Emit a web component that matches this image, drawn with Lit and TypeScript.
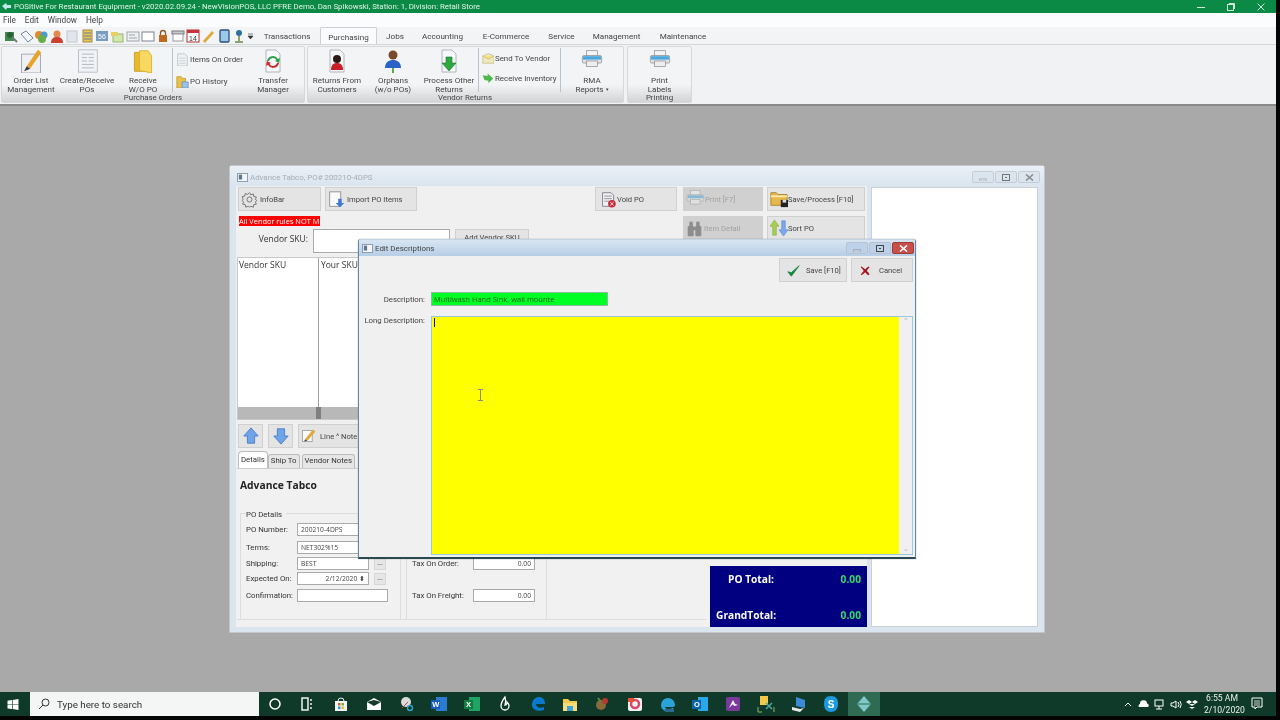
import { LitElement, html, css, svg } from "lit";
import { customElement } from "lit/decorators.js";

const doc = (inner: unknown = "") => svg`<path d="M5 1h10l4 4v18H5z" fill="#f7f8fa" stroke="#aeb4bc" stroke-width="1"/>${inner}`;
const printer = svg`<rect x="8" y="1" width="16" height="8" fill="#f4f4f4" stroke="#888"/><rect x="2" y="8" width="28" height="11" rx="2" fill="#dfe3e8" stroke="#888"/><rect x="3" y="9" width="26" height="5" fill="#4aa8dc"/><rect x="8" y="16" width="16" height="8" fill="#eee" stroke="#888"/>`;

const icons: Record<string, unknown> = {
  note: svg`<rect x="3" y="6" width="22" height="22" fill="#eef0f4" stroke="#9aa0aa"/><path d="M9 20 L22 1 L26 4 L13 23 Z" fill="#e8a32c"/><path d="M9 20l-3 6 7-3z" fill="#333"/>`,
  form: svg`<rect x="4" y="1" width="22" height="26" fill="#f1f3f6" stroke="#b4b9c2"/><path d="M8 6h14M8 10h6M16 10h6M8 14h6M16 14h6M8 18h14M8 22h14" stroke="#aab0ba"/>`,
  folder: svg`<path d="M4 4h14l4 3v19H4z" fill="#e8b92d" stroke="#c49a1e"/><path d="M10 2h10l4 6v20l-14-3z" fill="#f6d862" stroke="#d9ae2a"/>`,
  returns: svg`${doc()}<circle cx="12" cy="10" r="4" fill="#2a1a16"/><path d="M6 21c0-6 3-7 6-7s6 1 6 7z" fill="#c8202a"/>`,
  orphan: svg`<circle cx="12" cy="6" r="4.5" fill="#7a4a2c"/><path d="M4 19c0-6 4-8 8-8s8 2 8 8z" fill="#2a62c8"/><path d="M12 19v5M6 25h12" stroke="#5aa84a" stroke-width="2"/>`,
  down: svg`${doc()}<path d="M9 8h6v6h4l-7 8-7-8h4z" fill="#2ca83c" stroke="#1b7a2a" stroke-width=".6"/>`,
  transfer: svg`${doc()}<path d="M6 12a6 6 0 0 1 11-2l2-1-1 5-4-2 1.500-.700A4 4 0 0 0 8 12z" fill="#2aa04a"/><path d="M18 14a6 6 0 0 1-11 2l-2 1 1-5 4 2-1.500.700A4 4 0 0 0 16 14z" fill="#cc2a2a"/>`,
  printer,
  smalldoc: svg`<path d="M2 1h8l3 3v11H2z" fill="#eef2f4" stroke="#b8c2c8"/><path d="M4 6h7M4 9h7M4 12h7" stroke="#c8d0d4"/>`,
  smallfolder: svg`<path d="M1 2h5l2 2h3v11H1z" fill="#e8c14a" stroke="#c49a2e"/><path d="M7 8h7v7H7z" fill="#9cc2e8" stroke="#6a94c0"/>`,
  mail: svg`<path d="M1 5l7-3 7 3v9H1z" fill="#efe9c0" stroke="#c8be82"/><path d="M1 5l7 4 7-4" fill="#f5e27a" stroke="#c8be82"/>`,
  recv: svg`<path d="M1 4l6 1V2l7 6-6 6v-3L3 10z" fill="#4cb84c"/>`,
  gear: svg`<circle cx="10" cy="10" r="3" fill="none" stroke="#666"/><path d="M10 2l1.500 2.500 3-1 .5 3 3 .5-1 3 1.500 1-1.500 2 1 2.500-3 .5-.5 3-3-1-1.500 1-1.500-1-3 1-.5-3-3-.5 1-2.500-1.500-2L2.500 9.500l-1-3 3-.5.5-3 3 1z" fill="none" stroke="#666"/>`,
  importpo: svg`<rect x="2" y="1" width="13" height="17" fill="#fbfbfb" stroke="#888"/><path d="M12 9h4v5h3l-5 5-5-5h3z" fill="#3b78d8"/>`,
  voidpo: svg`<path d="M3 2h10l3 3v13H3z" fill="#eef0f4" stroke="#777"/><path d="M5 6h9M5 9h9M5 12h6" stroke="#888"/><circle cx="14" cy="15" r="4.500" fill="#c82a36"/><path d="M12 13l4 4M16 13l-4 4" stroke="#fff"/>`,
  print2: svg`<g opacity=".55" transform="scale(.65)">${printer}</g>`,
  save: svg`<path d="M1 3h6l2 2h10v12H1z" fill="#e8b84a" stroke="#a8842c"/><path d="M1 7h18" stroke="#fbe9b0" stroke-width="2"/><rect x="12" y="11" width="8" height="8" fill="#222"/><rect x="14" y="11" width="4" height="3" fill="#ddd"/>`,
  binoc: svg`<g fill="#8d8d8d"><rect x="2" y="7" width="7" height="12" rx="1"/><rect x="11" y="7" width="7" height="12" rx="1"/><rect x="4" y="2" width="4" height="6"/><rect x="12" y="2" width="4" height="6"/><rect x="8" y="8" width="4" height="4"/></g>`,
  sort: svg`<path d="M5 1l5 7H7v10H3V8H0z" fill="#a6cf52" stroke="#7ea32e" stroke-width=".6"/><path d="M15 19l-5-7h3V2h4v10h3z" fill="#7aa8e8" stroke="#4f82cc" stroke-width=".6"/>`,
  up: svg`<path d="M10 1l8 9h-4v8H6v-8H2z" fill="#6ea4ea" stroke="#4a7cc4"/>`,
  dn: svg`<path d="M10 19l8-9h-4V2H6v8H2z" fill="#6ea4ea" stroke="#4a7cc4"/>`,
  pencil: svg`<rect x="2" y="3" width="12" height="14" fill="#fafafa" stroke="#999"/><path d="M5 14L15 2l3 2.500L8 16z" fill="#e2a93a"/><path d="M5 14l-1 3 4-1z" fill="#444"/>`,
  check: svg`<path d="M1 9l4 5 9-12-9 8z" fill="#14863a" stroke="#14863a" stroke-linejoin="round"/>`,
  cross: svg`<path d="M2 2c3 2 4 3 5 4 2-2 3-3 5-4l1 1c-2 2-3 4-4 5 2 2 3 3 4 5l-2 1c-2-2-3-3-4-4-2 2-3 3-5 4l-1-1c2-2 3-3 4-5C4 6 3 5 1 3z" fill="#a8101c"/>`,
};

const icon = (name: string, size: number, vb = size) =>
  html`<svg class="ic" width=${size} height=${size} viewBox="0 0 ${vb} ${vb}">${icons[name]}</svg>`;

const quick = [
  svg`<rect x="1" y="3" width="9" height="9" fill="#3f8a4f"/><circle cx="6" cy="6" r="3" fill="#2b5f38"/><path d="M8 8l5 5" stroke="#777" stroke-width="2"/>`,
  svg`<path d="M2 5l5-3 7 7-5 4z" fill="#f4f6fa" stroke="#6b86ac"/>`,
  svg`<circle cx="5" cy="6" r="4" fill="#e68a2e"/><circle cx="10" cy="6" r="3.500" fill="#4a9ad4"/><circle cx="8" cy="10" r="4" fill="#6aae4a"/>`,
  svg`<circle cx="7" cy="5" r="3.500" fill="#e08a50"/><path d="M1 14c0-5 3-6 6-6s6 1 6 6z" fill="#cc4030"/>`,
  svg`<rect x="2" y="2" width="10" height="11" fill="#e2e6ec" stroke="#c2c8d0"/>`,
  svg`<rect x="3" y="1" width="9" height="12" fill="#e7c65c" stroke="#a08a3a"/><path d="M4 4h7M4 7h7M4 10h7" stroke="#6c7a8c"/>`,
  svg`<rect x="1" y="2" width="12" height="10" fill="#7a9cc0"/><text x="3" y="10" font-size="7" fill="#fff" font-family="Liberation Sans">56</text>`,
  svg`<rect x="3" y="5" width="10" height="8" fill="#cfe8b0" stroke="#9ab46c"/><path d="M1 3h7v4H1z" fill="#e8d060"/>`,
  svg`<rect x="1" y="3" width="12" height="9" fill="#eef0f2" stroke="#a0a6ae"/><path d="M3 6h6M3 9h8" stroke="#a0a6ae"/>`,
  svg`<rect x="1" y="3" width="12" height="9" fill="#fff" stroke="#7c8490"/>`,
  svg`<rect x="3" y="6" width="8" height="7" fill="#c06a1e"/><path d="M4.500 6V4a2.500 2.500 0 0 1 5 0v2" fill="none" stroke="#8c5a28" stroke-width="1.300"/>`,
  svg`<rect x="1" y="2" width="12" height="3" fill="#c8ccd2" stroke="#777"/><rect x="2" y="5" width="10" height="7" fill="#fff" stroke="#999"/>`,
  svg`<rect x="1" y="1" width="12" height="12" fill="#fff" stroke="#a33"/><rect x="1" y="1" width="12" height="3" fill="#c8343a"/><text x="3" y="12" font-size="7" font-family="Liberation Sans" fill="#333">14</text>`,
  svg`<path d="M2 12L11 2l2 2-9 10z" fill="#e2a93a"/>`,
  svg`<rect x="3" y="1" width="9" height="12" rx="1" fill="#9cc8ea" stroke="#27507a" stroke-width="1.300"/>`,
  svg`<circle cx="7" cy="4" r="3" fill="#2a70a0"/><path d="M7 7v5M3 13h8" stroke="#6a8a40" stroke-width="1.500"/>`,
];

const task = [
  svg`<circle cx="9" cy="9" r="5" fill="none" stroke="#fff" stroke-width="1.500"/>`,
  svg`<rect x="4" y="3" width="6" height="12" fill="none" stroke="#fff" stroke-width="1.400"/><path d="M13 4v2M13 8v2M13 12v2" stroke="#fff" stroke-width="1.400"/>`,
  svg`<path d="M3 6h12v10H3z" fill="#f4f4f4"/><path d="M6 6a3 3 0 0 1 6 0" fill="none" stroke="#f4f4f4"/><rect x="6" y="8" width="2.500" height="2.500" fill="#e25b2a"/><rect x="9.500" y="8" width="2.500" height="2.500" fill="#6fb33f"/><rect x="6" y="11.500" width="2.500" height="2.500" fill="#2d93dc"/><rect x="9.500" y="11.500" width="2.500" height="2.500" fill="#f4b92a"/>`,
  svg`<path d="M2 7l7-4 7 4v8H2z" fill="#fff"/><path d="M2 7l7 4 7-4-7-2z" fill="#17392a"/>`,
  svg`<circle cx="8" cy="7" r="5" fill="#dbdbdb"/><circle cx="12" cy="13" r="2.500" fill="none" stroke="#3aa0c8" stroke-width="1.400"/><path d="M4 13l6-6" stroke="#b84a4a"/>`,
  svg`<rect x="6" y="2" width="11" height="14" fill="#2b7cd3"/><rect x="1" y="5" width="9" height="9" fill="#185abd"/><text x="2.200" y="12.300" font-size="7.500" fill="#fff" font-family="Liberation Sans" font-weight="700">W</text>`,
  svg`<rect x="6" y="2" width="11" height="14" fill="#21a366"/><rect x="1" y="5" width="9" height="9" fill="#107c41"/><text x="3" y="12.300" font-size="7.500" fill="#fff" font-family="Liberation Sans" font-weight="700">X</text>`,
  svg`<path d="M9 2C6 6 5 9 5 11a4 4 0 0 0 8 0c0-2-1-3-2-4 0 2-1 3-2 3 1-3 1-5 0-8z" fill="none" stroke="#fff" stroke-width="1.300"/>`,
  svg`<path d="M3 10c0-5 3-8 7-8 4 0 6 3 6 7H7c0 3 4 5 8 3v3c-5 2-12 0-12-5z" fill="#0a7ad0"/>`,
  svg`<path d="M2 4h5l2 2h7v10H2z" fill="#f2c94c"/><rect x="2" y="8" width="14" height="8" fill="#f8dc7c"/><rect x="6" y="11" width="6" height="5" fill="#3ba4dc"/>`,
  svg`<circle cx="8" cy="10" r="5" fill="#8a6a3a"/><circle cx="12" cy="6" r="3" fill="#b8362e"/><path d="M5 3l3 4" stroke="#5a8a3a" stroke-width="2"/>`,
  svg`<rect x="2" y="3" width="14" height="13" rx="2" fill="#f3f3f3"/><circle cx="9" cy="9" r="4" fill="none" stroke="#d8486a" stroke-width="2.500"/><path d="M2 3h6v4H2z" fill="#e8502e"/>`,
  svg`<path d="M2 10a7 7 0 0 1 14 0c0 1-1 2-2 2H6c0 2 4 3 8 1v2c-5 3-12 1-12-5z" fill="#2aa3d8"/><rect x="6" y="14" width="9" height="3" fill="#2a6a8a"/>`,
  svg`<rect x="7" y="2" width="10" height="14" fill="#28a8ea"/><rect x="1" y="5" width="9" height="9" fill="#0a64ad"/><text x="3" y="12.300" font-size="7.500" fill="#fff" font-family="Liberation Sans" font-weight="700">O</text>`,
  svg`<rect x="2" y="2" width="14" height="14" rx="2" fill="#7a3a9c"/><path d="M5 13l4-8 2 4 3 1-4 1-1-2z" fill="#fff"/>`,
  svg`<path d="M3 1h8v9H3z" fill="#f2c94c"/><path d="M9 8l6 6M15 8l-6 6" stroke="#4aa8a0" stroke-width="1.500"/><path d="M1 12v5h4M17 12v5" stroke="#8ab860" fill="none"/>`,
  svg`<path d="M6 2l9 3v8l-9-2z" fill="#3a8ad8"/><path d="M2 12l8 2 4-1-4 4-8-2z" fill="#e8e8e8"/>`,
  svg`<path d="M9 1c5 0 7 3 7 8s-3 8-7 8-7-3-7-8 2-8 7-8z" fill="#1a9ae0"/><text x="5.700" y="13" font-size="10" fill="#fff" font-family="Liberation Sans" font-weight="700">S</text>`,
];
const taskX = [275, 307, 341, 374, 407, 439, 472, 505, 538, 570, 602, 635, 668, 700, 733, 766, 799, 831];

const winIcon = html`<svg class="ic" width="11" height="9" viewBox="0 0 13 11"><rect x=".5" y=".5" width="12" height="10" fill="#f4f7fa" stroke="#7d8ea2"/><rect x="2" y="2" width="4" height="6" fill="#5c7890"/></svg>`;
const ctl = (kind: string) => html`<span class="ctl ${kind}">${kind === "cl" ? html`<svg width="9" height="7" viewBox="0 0 9 7"><path d="M1 .5l7 6M8 .5l-7 6" stroke="#fff" stroke-width="1.600"/></svg>` : kind === "mx" ? html`<svg width="8" height="7" viewBox="0 0 8 7"><rect x=".5" y=".5" width="7" height="6" fill="none" stroke="#444"/><rect x="3" y="3" width="2" height="1" fill="#444"/></svg>` : html`<svg width="8" height="7" viewBox="0 0 8 7"><rect y="5" width="8" height="2" fill="#e8eef4" stroke="#556" stroke-width=".5"/></svg>`}</span>`;

@customElement("app-root")
export class AppRoot extends LitElement {
  static styles = css`
    :host { display: flex; flex-direction: column; width: 1280px; height: 720px; overflow: hidden; position: relative; background: #a9a9a9; font-family: Roboto, "Open Sans", sans-serif; font-size: 8px; color: #333; filter: blur(.3px); }
    .ic { display: block; flex: none; }
    .title { height: 13px; background: #0a8a44; color: #e4f3e9; display: flex; align-items: center; flex: none; padding-right: 4px; }
    .appic { margin: 0 3px 0 2px; }
    .title .t { font-size: 7.850px; white-space: nowrap; flex: 1; }
    .wbtn { width: 30px; display: flex; justify-content: center; }
    .menu { height: 14px; background: #fbfcfe; display: flex; align-items: center; padding-left: 3px; gap: 9px; flex: none; font-size: 8.200px; color: #444; }
    .tabrow { height: 18px; box-sizing: border-box; background: #f3f4f6; display: flex; align-items: flex-end; flex: none; border-bottom: 1px solid #d4d6da; padding-left: 4px; }
    .qat { display: flex; gap: 1.200px; align-self: center; width: 250px; }
    .rtab { height: 17px; line-height: 19px; text-align: center; color: #444; font-size: 8.100px; }
    .rtab.on { background: #fafbfc; border: 1px solid #ccd0d6; border-bottom: none; border-radius: 2px 2px 0 0; height: 16px; box-sizing: content-box; }
    .ribbon { height: 59px; background: #f1f2f4; display: flex; padding-left: 1px; gap: 2px; flex: none; border-bottom: 2px solid #8a8a8a; }
    .group { box-sizing: border-box; position: relative; background: linear-gradient(#f3f4f5 0 68%, #d3d4d6 100%); border: 1px solid #d6d8da; border-radius: 2px; display: flex; height: 57px; margin-top: 1px; }
    .g1 { width: 304px; }
    .g2 { width: 317px; }
    .g3 { width: 65px; margin-left: 1px; }
    .glabel { position: absolute; left: 0; right: 0; bottom: 0; text-align: center; font-size: 7.900px; line-height: 8px; color: #444; }
    .gl2 { width: 150px; left: 82px; right: auto; }
    .rb { display: flex; flex-direction: column; align-items: center; text-align: center; font-size: 8.050px; line-height: 9px; color: #444; padding-top: 2px; flex: none; white-space: nowrap; }
    .rb .i { height: 24px; display: flex; align-items: center; margin-bottom: 3px; flex: none; }
    .w54 { width: 54px; } .w58 { width: 58px; } .w38 { width: 38px; } .w62 { width: 62px; } .w63 { width: 63px; }
    .sep { border-left: 1px solid #b9c3cd; box-sizing: border-box; height: 44px; margin-top: 1px; padding-top: 1px; }
    .rs { display: flex; flex-direction: column; height: 44px; width: 82px; padding-left: 3px; box-sizing: border-box; font-size: 7.900px; color: #444; border-left: 1px solid #b9c3cd; margin-top: 1px; flex: none; }
    .rs1 { gap: 4px; padding-top: 2px; }
    .rs2 { gap: 2px; padding-top: 1px; }
    .rs div { display: flex; align-items: center; gap: 1px; white-space: nowrap; height: 18px; }
    .caretdn { font-size: 5px; vertical-align: 1px; }

    .desk { position: relative; flex: 1; }
    .win { position: absolute; box-sizing: border-box; border-radius: 3px 3px 0 0; }
    .wt { display: flex; align-items: center; height: 19px; padding: 0 4px 0 7px; gap: 2px; font-size: 7.900px; flex: none; box-sizing: border-box; }
    .po { left: 229px; top: 59px; width: 816px; height: 468px; background: #dbe5ef; border: 1px solid #c2c6ca; display: flex; flex-direction: column; }
    .po .wt { color: #a7adb5; background: linear-gradient(#eaf0f6, #dae5f0); padding-top: 3px; }
    .ctls { margin-left: auto; display: flex; gap: 1px; }
    .ctl { width: 22px; height: 12px; box-sizing: border-box; border: 1px solid #b6c2ce; border-radius: 2px; display: flex; align-items: center; justify-content: center; background: #d9e3ec; }
    .po .ctl { opacity: .7; }
    .ctl.cl { background: #c9504a; border-color: #9e3a36; }
    .po .ctl.cl { background: #dbe4ec; border-color: #b6c2ce; }
    .po .ctl.cl path { stroke: #666; }
    .pob { flex: 1; margin: 1px 6px 5px 6px; display: flex; gap: 4px; min-height: 0; }
    .main { width: 631px; background: #f0f0f0; display: flex; flex-direction: column; flex: none; }
    .side { flex: 1; background: #fff; border: 1px solid #ccd0d4; margin-top: 1px; }
    .top { display: flex; height: 71px; flex: none; }
    .tl { width: 359px; flex: none; padding-top: 1px; }
    .btn { box-sizing: border-box; background: #e4e4e4; border: 1px solid #d0d0d0; height: 24px; display: flex; align-items: center; gap: 2px; padding-left: 2px; font-size: 7.600px; color: #444; flex: none; white-space: nowrap; overflow: hidden; }
    .btn.off { background: #d0d0d0; color: #a2a2a2; }
    .row { display: flex; gap: 4px; padding-left: 2px; }
    .w83 { width: 83px; } .w92 { width: 92px; } .w70 { width: 70px; } .w68 { width: 68px; }
    .red { margin: 5px 0 0 3px; background: #f00; color: #fff; width: 81px; height: 10px; line-height: 10px; font-family: "Open Sans", sans-serif; font-size: 7.400px; overflow: hidden; white-space: nowrap; }
    .sku { display: flex; align-items: center; margin-top: 3px; height: 24px; }
    .sku label { width: 77px; text-align: right; padding-right: 5px; margin-bottom: 6px; box-sizing: border-box; font-family: "Open Sans", sans-serif; font-size: 8.500px; flex: none; }
    .inp { box-sizing: border-box; background: #fff; border: 1px solid #aaa; }
    .skuin { width: 137px; height: 24px; flex: none; }
    .addb { width: 74px; margin-left: 5px; justify-content: center; padding: 3px 0 0; align-items: flex-start; }
    .tr { flex: 1; display: grid; grid-template-columns: 82px 90px 98px; grid-template-rows: 24px 24px; row-gap: 5px; padding: 1px 0 0 0; }
    .c1 { padding-left: 4px; gap: 0; }
    .c2 { margin-left: 6px; width: 80px; gap: 1px; }
    .c3 { gap: 0; }
    .grid { margin: 0 0 0 1px; height: 163px; width: 630px; background: #fff; border: 1px solid #c8c8c8; box-sizing: border-box; display: flex; flex-direction: column; flex: none; }
    .gh { flex: 1; display: flex; font-family: "Open Sans", sans-serif; font-size: 8.500px; }
    .gh span { padding: 1px 0 0 1px; }
    .gh .a { width: 81px; border-right: 1px solid #a0a0a0; box-sizing: border-box; }
    .gh .b { padding-left: 2px; }
    .scr { height: 12px; background: #b8b8b8; padding-left: 78px; }
    .scr i { display: block; width: 5px; height: 12px; background: #808080; }
    .tools { display: flex; gap: 6px; height: 24px; margin: 4px 0 0 2px; flex: none; }
    .sq { width: 25px; justify-content: center; padding: 0; }
    .sq2 { margin-left: -1px; }
    .pen { margin-left: -1px; gap: 3px; }
    .tabs { display: flex; height: 16px; margin-top: 4px; padding-left: 2px; flex: none; font-size: 7.800px; align-items: flex-end; position: relative; }
    .tb { height: 13px; line-height: 12px; border: 1px solid #bbb; border-bottom: none; padding: 0 2px; border-radius: 3px 3px 0 0; background: #e6e6e6; box-sizing: content-box; }
    .tb.on { height: 16px; line-height: 15px; background: #fff; padding: 0 2px; border-radius: 4px 4px 0 0; }
    .gap1 { margin-left: 2px; }
    .pane { flex: 1; border-top: 1px solid #ccc; margin-left: 1px; display: flex; min-height: 0; background: #f1f1f1; }
    .pa { width: 469px; flex: none; display: flex; margin-bottom: 7px; border-bottom: 1px solid #ddd; }
    .pl { width: 164px; flex: none; display: flex; flex-direction: column; border-right: 1px solid #ddd; box-sizing: border-box; }
    .co { font-family: "Open Sans", sans-serif; font-weight: 700; font-size: 10.300px; padding: 9px 0 0 3px; height: 44px; box-sizing: border-box; color: #222; flex: none; }
    .fs { flex: 1; border: 1px solid #ddd; border-bottom: none; border-right: none; margin-left: 3px; padding: 0 0 0 5px; font-size: 7.800px; }
    .lg { display: block; height: 13px; margin-top: -4px; background: #f1f1f1; width: 40px; }
    .frs { display: grid; grid-template-rows: 18px 16px 15px 17px 13px; }
    .fr { display: flex; align-items: center; height: 13px; }
    .fr label { width: 51px; flex: none; white-space: nowrap; }
    .fr .inp { height: 13px; line-height: 11px; font-family: "Open Sans", sans-serif; font-size: 6.700px; padding: 0 3px; color: #444; white-space: nowrap; }
    .i72 { width: 72px; } .i91 { width: 91px; } .right { text-align: right; }
    .dots { margin-left: 5px; width: 12px; height: 12px; background: #e6e6e6; border: 1px solid #d6d6d6; box-sizing: border-box; text-align: center; line-height: 8px; font-size: 7px; }
    .pm { width: 140px; flex: none; margin-left: 5px; padding-left: 5px; border-left: 1px solid #ddd; box-sizing: border-box; display: flex; flex-direction: column; font-size: 7.800px; }
    .pm .fr label { width: 61px; }
    .pm .inp { width: 62px; text-align: right; }
    .sp1 { height: 88px; flex: none; }
    .sp2 { height: 19px; flex: none; }
    .pn { width: 160px; flex: none; border-left: 1px solid #ddd; box-sizing: border-box; }
    .tot { width: 157px; height: 61px; margin: auto 0 0 4px; background: #000080; color: #fff; font-family: "Open Sans", sans-serif; font-weight: 700; font-size: 10.200px; display: grid; grid-template-rows: 26px 24px; row-gap: 11px; padding: 0 6px; box-sizing: border-box; flex: none; }
    .tot div { display: flex; justify-content: space-between; align-items: center; }
    .tot b { color: #33dd66; font-weight: 700; }
    .tot .p { padding-left: 12px; }
    .dlg { left: 358px; top: 133px; width: 558px; height: 320px; background: #f0f0f0; border: 1px solid #5d8aa8; border-bottom: 2px solid #2a4a50; border-top-color: #c2d4e6; display: flex; flex-direction: column; box-shadow: 0 0 1px #555; }
    .dlg .wt { background: linear-gradient(#d8e6f3, #b7cee6); color: #444; height: 16px; padding: 0 1px 0 3px; }
    .dlg .ctl { background: #bdd2e8; }
    .dlg .cl { background: #c9504a; }
    .db { flex: 1; padding: 2px 2px 2px 0; display: flex; flex-direction: column; }
    .dbtns { display: flex; justify-content: flex-end; gap: 4px; height: 24px; flex: none; margin-bottom: 10px; }
    .dbtns .btn { padding-left: 7px; gap: 6px; }
    .dbtns .cn { width: 62px; padding-left: 8px; gap: 8px; }
    .l { width: 66px; text-align: right; flex: none; font-size: 7.800px; color: #444; padding-right: 6px; white-space: nowrap; }
    .d1 { display: flex; align-items: center; height: 14px; flex: none; margin-bottom: 10px; }
    .green { width: 177px; height: 14px; background: #00ff22; border: 1px solid #8fb8a0; box-sizing: border-box; font-family: "Open Sans", sans-serif; font-size: 7.500px; line-height: 12px; padding-left: 2px; color: #1a5a24; white-space: nowrap; overflow: hidden; }
    .d2 { display: flex; flex: 1; }
    .d2 .l { line-height: 9px; }
    .ta { width: 482px; height: 239px; box-sizing: border-box; border: 1px solid #9dc8d8; background: #ff0; display: flex; justify-content: space-between; flex: none; }
    .caret { width: 1px; height: 9px; background: #111; margin: 1px 0 0 2px; }
    .vs { width: 13px; background: #f0f0f0; display: flex; flex-direction: column; justify-content: space-between; align-items: center; font-size: 7px; color: #aaa; line-height: 9px; }
    .ibeam { position: absolute; left: 478px; top: 283px; }
    .bar { height: 28px; flex: none; background: #0f3a2a; display: flex; position: relative; align-items: flex-start; color: #e8efe9; }
    .strip { position: absolute; left: 0; right: 0; bottom: 0; height: 4px; background: #050505; }
    .edge { position: absolute; right: 0; top: 0; width: 4px; height: 720px; background: #050505; }
    .winb { width: 30px; height: 24px; display: flex; justify-content: center; align-items: center; padding: 0 4px 0 0; box-sizing: border-box; flex: none; }
    .search { width: 229px; height: 24px; background: #f4f5f5; color: #333; display: flex; align-items: center; gap: 7px; padding-left: 8px; box-sizing: border-box; font-size: 9.800px; flex: none; }
    .apps { position: absolute; left: 0; top: 3px; }
    .ti { position: absolute; top: 0; margin-left: -9px; }
    .act { position: absolute; left: 848px; top: 0; width: 32px; height: 24px; background: #2f6b52; display: flex; align-items: center; justify-content: center; }
    .tray { position: absolute; top: 4px; left: 1120px; display: flex; align-items: center; height: 17px; }
    .tray svg { display: block; }
    .clock { position: absolute; left: 1204px; top: 0; width: 36px; text-align: center; font-size: 8.600px; line-height: 12px; }
    .notif { position: absolute; left: 1251px; top: 5px; }
  `;

  render() {
    const rtabs: [string, number, boolean?][] = [["Transactions", 66], ["Purchasing", 55, true], ["Jobs", 36], ["Accounting", 59], ["E-Commerce", 68], ["Service", 43], ["Management", 67], ["Maintenance", 66]];
    return html`
      <div class="title">
        <svg class="ic appic" width="9" height="9" viewBox="0 0 9 9"><path d="M0 4l4-3 1 2h4v3H5l-1 2z" fill="#bfe6e8"/></svg>
        <span class="t">POSitive For Restaurant Equipment - v2020.02.09.24 - NewVisionPOS, LLC PFRE Demo, Dan Spikowski, Station: 1, Division: Retail Store</span>
        <span class="wbtn"><svg width="8" height="8" viewBox="0 0 8 8"><path d="M0 4.500h8" stroke="#cfe8d8"/></svg></span>
        <span class="wbtn"><svg width="8" height="8" viewBox="0 0 8 8"><rect x=".5" y="1.500" width="6" height="6" fill="none" stroke="#cfe8d8"/><path d="M2 1V.5h5.500V6" fill="none" stroke="#cfe8d8"/></svg></span>
        <span class="wbtn"><svg width="8" height="8" viewBox="0 0 8 8"><path d="M.5.500l7 7M7.500.500l-7 7" stroke="#cfe8d8"/></svg></span>
      </div>
      <div class="menu"><span>File</span><span>Edit</span><span>Window</span><span>Help</span></div>
      <div class="tabrow">
        <div class="qat">${quick.map((q) => html`<svg class="ic" width="14" height="14" viewBox="0 0 14 14">${q}</svg>`)}<svg class="ic" width="7" height="14" viewBox="0 0 7 14"><path d="M1 5h5M1 7h5l-2.500 3z" fill="#333" stroke="#333" stroke-width=".6"/></svg></div>
        ${rtabs.map(([t, w, on]) => html`<div class="rtab ${on ? "on" : ""}" style="width:${w}px">${t}</div>`)}
      </div>
      <div class="ribbon">
        <div class="group g1">
          <div class="rb w58"><div class="i">${icon("note", 24, 28)}</div><div>Order List<br />Management</div></div>
          <div class="rb w54"><div class="i">${icon("form", 24, 28)}</div><div>Create/Receive<br />POs</div></div>
          <div class="rb w58"><div class="i">${icon("folder", 24, 28)}</div><div>Receive<br />W/O PO</div></div>
          <div class="rs rs1"><div>${icon("smalldoc", 13, 15)}Items On Order</div><div>${icon("smallfolder", 13, 15)}PO History</div></div>
          <div class="rb w38"><div class="i">${icon("transfer", 24, 24)}</div><div>Transfer<br />Manager</div></div>
          <div class="glabel">Purchase Orders</div>
        </div>
        <div class="group g2">
          <div class="rb w58"><div class="i">${icon("returns", 24, 24)}</div><div>Returns From<br />Customers</div></div>
          <div class="rb w54"><div class="i">${icon("orphan", 24, 24)}</div><div>Orphans<br />(w/o POs)</div></div>
          <div class="rb w58"><div class="i">${icon("down", 24, 24)}</div><div>Process Other<br />Returns</div></div>
          <div class="rs rs2"><div>${icon("mail", 12, 15)}Send To Vendor</div><div>${icon("recv", 12, 15)}Receive Inventory</div></div>
          <div class="rb w63 sep"><div class="i">${icon("printer", 22, 32)}</div><div>RMA<br />Reports <span class="caretdn">▾</span></div></div>
          <div class="glabel gl2">Vendor Returns</div>
        </div>
        <div class="group g3">
          <div class="rb w63"><div class="i">${icon("printer", 22, 32)}</div><div>Print<br />Labels</div></div>
          <div class="glabel">Printing</div>
        </div>
      </div>

      <div class="desk">
        <div class="win po">
          <div class="wt">${winIcon}<span>Advance Tabco, PO# 200210-4DPS</span><div class="ctls">${ctl("mn")}${ctl("mx")}${ctl("cl")}</div></div>
          <div class="pob">
            <div class="main">
              <div class="top">
                <div class="tl">
                  <div class="row">
                    <div class="btn w83">${icon("gear", 17, 20)}InfoBar</div>
                    <div class="btn w92">${icon("importpo", 17, 20)}Import PO Items</div>
                  </div>
                  <div class="red">All Vendor rules NOT M</div>
                  <div class="sku"><label>Vendor SKU:</label><div class="inp skuin"></div><div class="btn addb">Add Vendor SKU</div></div>
                </div>
                <div class="tr">
                  <div class="btn c1">${icon("voidpo", 17, 20)}Void PO</div>
                  <div class="btn off c2">${icon("print2", 18, 20)}Print [F7]</div>
                  <div class="btn c3">${icon("save", 18, 20)}Save/Process [F10]</div>
                  <div></div>
                  <div class="btn off c2">${icon("binoc", 17, 20)}Item Detail</div>
                  <div class="btn c3">${icon("sort", 18, 20)}Sort PO</div>
                </div>
              </div>
              <div class="grid">
                <div class="gh"><span class="a">Vendor SKU</span><span class="b">Your SKU</span></div>
                <div class="scr"><i></i></div>
              </div>
              <div class="tools">
                <div class="btn sq">${icon("up", 18, 20)}</div>
                <div class="btn sq sq2">${icon("dn", 18, 20)}</div>
                <div class="btn w70 pen">${icon("pencil", 16, 20)}Line ^ Note</div>
              </div>
              <div class="tabs">
                <div class="tb on">Details</div><div class="tb">Ship To</div><div class="tb gap1">Vendor Notes</div>
              </div>
              <div class="pane">
                <div class="pa">
                  <div class="pl">
                    <div class="co">Advance Tabco</div>
                    <div class="fs">
                      <span class="lg">PO Details</span>
                      <div class="frs">
                        <div class="fr"><label>PO Number:</label><div class="inp i72">200210-4DPS</div></div>
                        <div class="fr"><label>Terms:</label><div class="inp i72">NET302%15</div></div>
                        <div class="fr"><label>Shipping:</label><div class="inp i72">BEST</div><div class="dots">...</div></div>
                        <div class="fr"><label>Expected On:</label><div class="inp i72 right">2/12/2020 ⬍</div><div class="dots">...</div></div>
                        <div class="fr"><label>Confirmation:</label><div class="inp i91"></div></div>
                      </div>
                    </div>
                  </div>
                  <div class="pm">
                    <div class="sp1"></div>
                    <div class="fr"><label>Tax On Order:</label><div class="inp">0.00</div></div>
                    <div class="sp2"></div>
                    <div class="fr"><label>Tax On Freight:</label><div class="inp">0.00</div></div>
                  </div>
                  <div class="pn"></div>
                </div>
                <div class="tot">
                  <div class="p"><span>PO Total:</span><b>0.00</b></div>
                  <div><span>GrandTotal:</span><b>0.00</b></div>
                </div>
              </div>
            </div>
            <div class="side"></div>
          </div>
        </div>

        <div class="win dlg">
          <div class="wt">${winIcon}<span>Edit Descriptions</span><div class="ctls">${ctl("mn")}${ctl("mx")}${ctl("cl")}</div></div>
          <div class="db">
            <div class="dbtns">
              <div class="btn w68">${icon("check", 13, 15)}Save [F10]</div>
              <div class="btn cn">${icon("cross", 11, 15)}Cancel</div>
            </div>
            <div class="d1"><span class="l">Description:</span><div class="green">Multiwash Hand Sink, wall mounte</div></div>
            <div class="d2"><span class="l">Long Description:</span>
              <div class="ta"><div class="caret"></div><div class="vs"><span>⌃</span><span>⌄</span></div></div>
            </div>
          </div>
        </div>
        <svg class="ibeam" width="5" height="12" viewBox="0 0 5 12"><path d="M0 .5h5M2.500.5v11M0 11.500h5" stroke="#888" fill="none"/></svg>
      </div>

      <div class="bar">
        <div class="winb"><svg width="12" height="11" viewBox="0 0 12 12"><path d="M0 1.800l5-.7v4.600H0zM5.700 1l6.300-1v5.700H5.700zM0 6.300h5V11l-5-.7zM5.700 6.300H12V12l-6.300-1z" fill="#fff"/></svg></div>
        <div class="search"><svg class="ic" width="12" height="12" viewBox="0 0 12 12"><circle cx="7.500" cy="4.500" r="3.500" fill="none" stroke="#333"/><path d="M5 7l-4 4" stroke="#333"/></svg>Type here to search</div>
        <div class="act"><svg width="14" height="16" viewBox="0 0 14 16"><path d="M7 0l7 8-7 8-7-8z" fill="#7fc8c8"/><path d="M0 8h14" stroke="#2f6b52"/></svg></div>
        <div class="apps">${task.map((t, i) => html`<svg class="ic ti" style="left:${taskX[i]}px" width="18" height="18" viewBox="0 0 18 18">${t}</svg>`)}</div>
        <div class="tray">
          <svg width="16" height="17" viewBox="0 0 16 17"><path d="M5 10l3-3 3 3" stroke="#fff" fill="none"/></svg>
          <svg width="16" height="17" viewBox="0 0 16 17"><path d="M3 11a2 2 0 0 1 1-3 3.500 3.500 0 0 1 7-.5 2 2 0 0 1 1 3.500z" fill="#fff"/></svg>
          <svg width="16" height="17" viewBox="0 0 16 17"><rect x="3" y="4" width="8" height="6" fill="none" stroke="#fff"/><path d="M7 10v3M4 13h6" stroke="#fff"/></svg>
          <svg width="16" height="17" viewBox="0 0 16 17"><path d="M3 7h2l3-2v7l-3-2H3z" fill="none" stroke="#fff"/><path d="M10 6a4 4 0 0 1 0 5M12 5a6 6 0 0 1 0 7" stroke="#fff" fill="none"/></svg>
          <svg width="16" height="17" viewBox="0 0 16 17"><path d="M8 6L5 4 2 6l3 2zM8 6l3-2 3 2-3 2zM5 8l3 2 3-2M5 11l3 2 3-2" fill="#fff"/></svg>
        </div>
        <div class="clock">6:55 AM<br />2/10/2020</div>
        <svg class="ic notif" width="12" height="13" viewBox="0 0 12 13"><path d="M1 1h10v9H6l-2 2v-2H1z" fill="none" stroke="#fff"/><path d="M3 4h6M3 6h6M3 8h6" stroke="#fff" stroke-width=".8"/></svg>
        <div class="strip"></div>
      </div>
      <div class="edge"></div>
    `;
  }
}
